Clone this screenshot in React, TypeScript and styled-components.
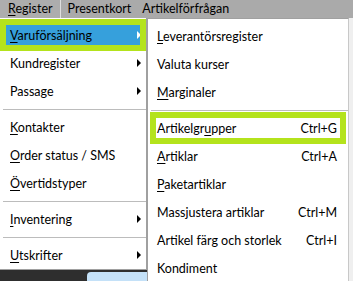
import React from 'react';
import styled, { createGlobalStyle } from 'styled-components';

const Global = createGlobalStyle`
  html, body { margin: 0; padding: 0; background: #2e2e2e; }
  body {
    font-family: Lato, "Noto Sans", sans-serif;
    font-size: 12.5px;
    color: #000;
  }
  u { text-decoration-thickness: 1px; text-underline-offset: 2px; }
`;

const Screen = styled.div`
  width: 353px;
  height: 281px;
  overflow: hidden;
  display: flex;
  flex-direction: column;
  background: #aaaaaa;
`;

const MenuBar = styled.div`
  height: 18px;
  flex: none;
  display: flex;
  align-items: stretch;
  background: #aaaaaa;
`;

const BarItem = styled.div<{ $active?: boolean }>`
  display: flex;
  align-items: center;
  padding: ${p => (p.$active ? '0 7px 1px 8px' : '0 3px 1px 7px')};
  white-space: nowrap;
  border-right: 1px solid ${p => (p.$active ? '#dedede' : 'transparent')};
  background: ${p => (p.$active ? '#adadad' : 'transparent')};
`;

const Body = styled.div`
  flex: 1;
  display: flex;
  min-height: 0;
`;

const LeftColumn = styled.div`
  width: 147px;
  flex: none;
  display: flex;
  flex-direction: column;
`;

const Menu = styled.div`
  background: #fff;
  border-right: 1px solid #a0a0a0;
  border-bottom: 1px solid #a0a0a0;
  padding-top: 3px;
  display: flex;
  flex-direction: column;
`;

const SubMenu = styled.div`
  width: 200px;
  flex: none;
  background: #fff;
  border-left: 1px solid #a0a0a0;
  border-top: 1px solid #a0a0a0;
  border-right: 1px solid #c8c8c8;
  padding-top: 3px;
  display: flex;
  flex-direction: column;
`;

const RightStrip = styled.div`
  flex: 1;
  background: #efefef;
`;

const Row = styled.div<{ $selected?: boolean }>`
  position: relative;
  height: 28px;
  flex: none;
  display: flex;
  align-items: center;
  padding: 0 5px 0 10px;
  white-space: nowrap;
  background: ${p => (p.$selected ? '#36a0dc' : 'transparent')};
  color: #000;
`;

const SubRow = styled(Row)`
  padding: 0 11px 0 9px;
`;

const Label = styled.span`
  flex: 1;
`;

const Shortcut = styled.span`
  text-align: right;
`;

const Arrow = styled.span<{ $light?: boolean }>`
  width: 0;
  height: 0;
  border-top: 4px solid transparent;
  border-bottom: 4px solid transparent;
  border-left: 4px solid ${p => (p.$light ? '#fff' : '#000')};
`;

const Highlight = styled.div<{ $inset: number }>`
  position: absolute;
  top: -2px;
  bottom: -2px;
  left: ${p => p.$inset}px;
  right: ${p => p.$inset}px;
  border: 6px solid #b4e31c;
  pointer-events: none;
`;

const Separator = styled.div`
  height: 8px;
  flex: none;
  display: flex;
  align-items: center;
  padding-left: 3px;
  &::after {
    content: '';
    flex: 1;
    height: 1px;
    background: #bcbcbc;
  }
`;

const Desktop = styled.div`
  flex: 1;
  background: #2e2e2e;
  display: flex;
  justify-content: flex-end;
  align-items: flex-end;
`;

const Tab = styled.div`
  width: 60px;
  height: 9px;
  background: #c4e1f8;
  border-top-left-radius: 4px;
`;

type SubItem = { label: React.ReactNode; shortcut?: string; highlight?: boolean };

export default function App() {
  const sub: (SubItem | 'sep')[] = [
    { label: <><u>L</u>everantörsregister</> },
    { label: <>Valuta kurser</> },
    { label: <><u>M</u>arginaler</> },
    'sep',
    { label: <>Artikelgr<u>u</u>pper</>, shortcut: 'Ctrl+G', highlight: true },
    { label: <><u>A</u>rtiklar</>, shortcut: 'Ctrl+A' },
    { label: <><u>P</u>aketartiklar</> },
    { label: <>Massjustera artiklar</>, shortcut: 'Ctrl+M' },
    { label: <>Artikel färg och storlek</>, shortcut: 'Ctrl+I' },
    { label: <>Kondiment</> },
  ];

  return (
    <>
      <Global />
      <Screen>
        <MenuBar>
          <BarItem $active><span><u>R</u>egister</span></BarItem>
          <BarItem>Presentkort</BarItem>
          <BarItem>Artikelförfrågan</BarItem>
        </MenuBar>
        <Body>
          <LeftColumn>
            <Menu>
              <Row $selected>
                <Label><u>V</u>aruförsäljning</Label>
                <Arrow $light />
                <Highlight $inset={0} />
              </Row>
              <Row>
                <Label>Kundregister</Label>
                <Arrow />
              </Row>
              <Row>
                <Label>Passage</Label>
                <Arrow />
              </Row>
              <Separator />
              <Row><Label><u>K</u>ontakter</Label></Row>
              <Row><Label><u>O</u>rder status / SMS</Label></Row>
              <Row><Label><u>Ö</u>vertidstyper</Label></Row>
              <Separator />
              <Row>
                <Label><u>I</u>nventering</Label>
                <Arrow />
              </Row>
              <Separator />
              <Row>
                <Label><u>U</u>tskrifter</Label>
                <Arrow />
              </Row>
            </Menu>
            <Desktop>
              <Tab />
            </Desktop>
          </LeftColumn>
          <SubMenu>
            {sub.map((it, i) =>
              it === 'sep' ? (
                <Separator key={i} />
              ) : (
                <SubRow key={i}>
                  <Label>{it.label}</Label>
                  {it.shortcut && <Shortcut>{it.shortcut}</Shortcut>}
                  {it.highlight && <Highlight $inset={2} />}
                </SubRow>
              )
            )}
          </SubMenu>
          <RightStrip />
        </Body>
      </Screen>
    </>
  );
}
